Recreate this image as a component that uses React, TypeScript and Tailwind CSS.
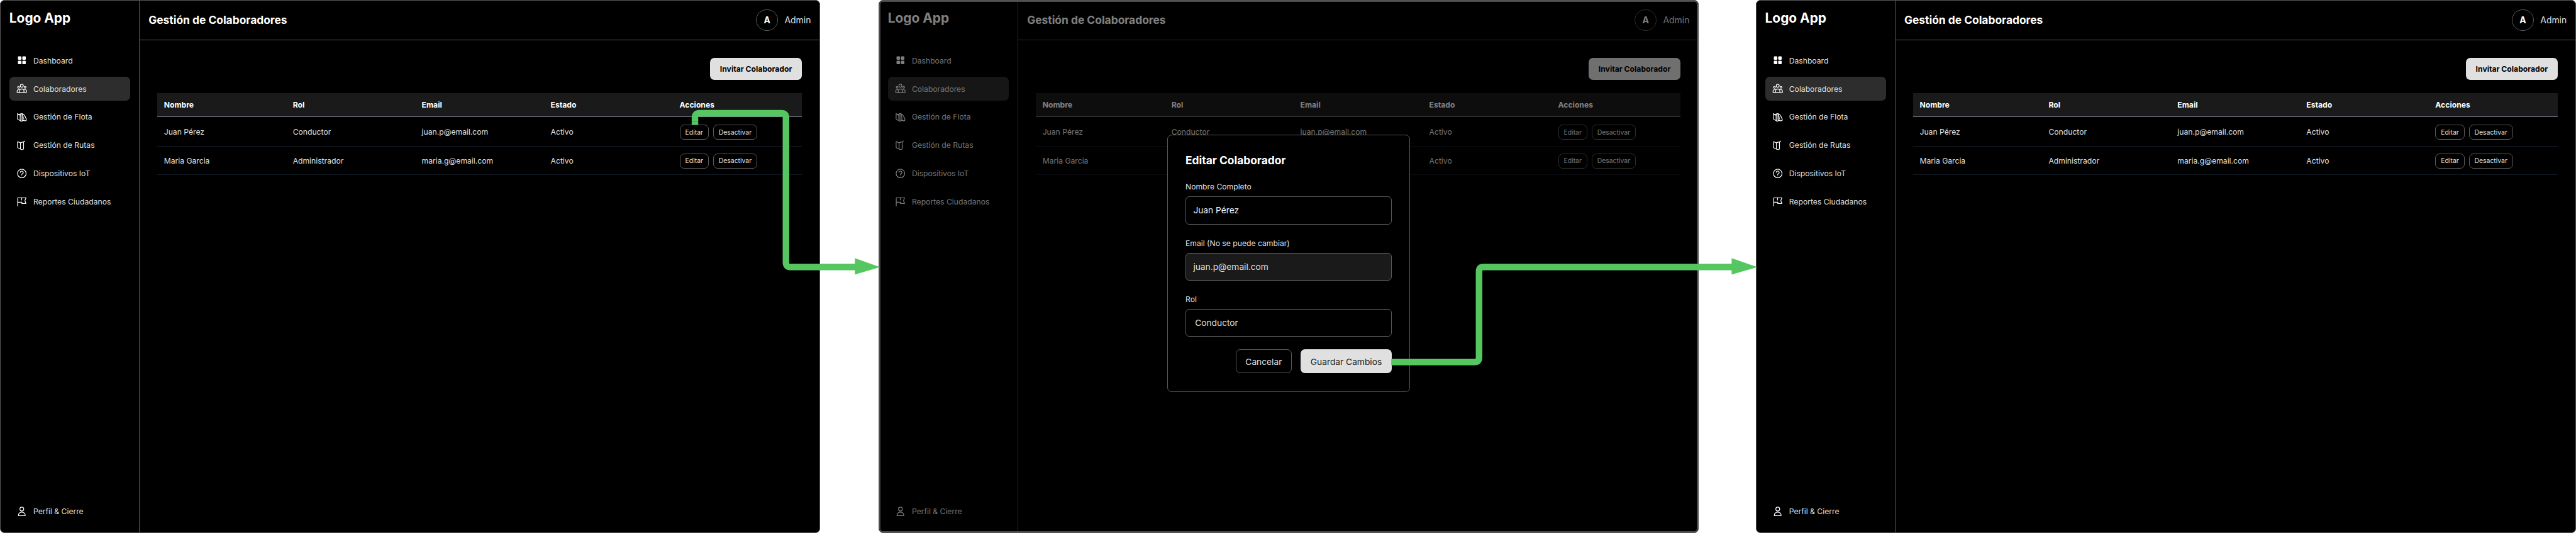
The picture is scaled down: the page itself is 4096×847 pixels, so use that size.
import type { ReactNode } from "react";

function Icon({ children }: { children: ReactNode }) {
  return (
    <svg
      viewBox="0 0 25 25"
      className="size-[17.4px] shrink-0 text-white"
      fill="none"
      stroke="currentColor"
      strokeWidth="1.7"
      strokeLinecap="round"
      strokeLinejoin="round"
      aria-hidden="true"
    >
      {children}
    </svg>
  );
}

const DashboardIcon = () => (
  <Icon>
    <g fill="currentColor" stroke="none">
      <rect x="3.6" y="3.6" width="8" height="8" rx="2" />
      <rect x="13.6" y="3.6" width="8" height="8" rx="2" />
      <rect x="3.6" y="13.6" width="8" height="8" rx="2" />
      <rect x="13.6" y="13.6" width="8" height="8" rx="2" />
    </g>
  </Icon>
);

const PeopleIcon = () => (
  <Icon>
    <circle cx="12.5" cy="6.2" r="3.4" />
    <circle cx="5" cy="9.6" r="2.1" />
    <circle cx="20" cy="9.6" r="2.1" />
    <path d="M7.6 21.4V18a4.9 4.6 0 0 1 9.8 0V21.4" />
    <path d="M7.4 15C4.2 14 1.8 15.9 1.8 18.4V21.4H23.2V18.4C23.2 15.9 20.8 14 17.6 15" />
  </Icon>
);

const FleetIcon = () => (
  <Icon>
    <path d="M8.8 20.9 3.9 18.6Q2.7 18 2.7 16.8V4.9L5.6 7.6 8.8 6.2" />
    <path d="M5.8 7.8 8.6 8.8" />
    <rect x="8.8" y="5.4" width="5.4" height="17.2" rx="2.4" />
    <path d="M11.4 7V21" strokeWidth="1.2" />
    <path d="M10.2 5.4C16.6 4.4 19 8.6 22.6 17.2 23.6 20 22.6 21.2 20.6 21.3 18 21.5 15.8 21 14.4 20.3" />
    <path d="M14.6 8.2 17.6 19.6" strokeWidth="1.2" />
  </Icon>
);

const RoutesIcon = () => (
  <Icon>
    <path d="M9.2 21.2 3.9 18.8Q2.7 18.2 2.7 17V5.6Q2.7 4.2 4 4.8L9.4 7.1V21.2" />
    <path d="M9.4 7.1 16.4 4.9 19.2 3.1" />
    <path d="M9.4 21.2Q12.2 23.4 15.2 22.2 16.5 21.6 16.5 20V5.2" />
  </Icon>
);

const HelpIcon = () => (
  <Icon>
    <circle cx="12.5" cy="12.5" r="9.8" />
    <path d="M9 10.2A3.4 3.2 0 1 1 13.8 13.1Q12.5 13.8 12.5 15" />
    <path d="M12.5 18V18.1" strokeWidth="2" />
  </Icon>
);

const FlagIcon = () => (
  <Icon>
    <path d="M3 22V4.4Q3 3.2 4.4 3.2H22L19.6 9.8 22 16.4H12.6V13.4H3" />
    <path d="M12.2 3.4V8.6" />
  </Icon>
);

const ProfileIcon = () => (
  <Icon>
    <circle cx="12.5" cy="7.2" r="4.4" />
    <path d="M4.8 22.3V21a7.7 6.8 0 0 1 15.4 0V22.3Z" />
  </Icon>
);

const NAV = [
  { label: "Dashboard", icon: <DashboardIcon /> },
  { label: "Colaboradores", icon: <PeopleIcon />, active: true },
  { label: "Gestión de Flota", icon: <FleetIcon /> },
  { label: "Gestión de Rutas", icon: <RoutesIcon /> },
  { label: "Dispositivos IoT", icon: <HelpIcon /> },
  { label: "Reportes Ciudadanos", icon: <FlagIcon /> },
];

const COLUMNS = ["Nombre", "Rol", "Email", "Estado", "Acciones"];

const ROWS = [
  ["Juan Pérez", "Conductor", "juan.p@email.com", "Activo"],
  ["Maria Garcia", "Administrador", "maria.g@email.com", "Activo"],
];

function NavItem({ label, icon, active }: { label: string; icon: ReactNode; active?: boolean }) {
  return (
    <a
      className={
        "flex h-[38px] items-center gap-[9.7px] rounded-[7px] pl-[10.7px] text-[12.17px] text-[#e0e0e0] " +
        (active ? "bg-[#2d2d2d]" : "")
      }
    >
      {icon}
      <span className="pt-[1.6px] whitespace-nowrap">{label}</span>
    </a>
  );
}

function Sidebar() {
  return (
    <aside className="flex w-[221px] shrink-0 flex-col border-r border-[#555555] pt-[13.8px] pr-[13.9px] pb-[14.8px] pl-[14.2px]">
      <div className="-ml-[0.4px] text-[20.87px] leading-[28px] font-bold text-white">Logo App</div>
      <nav className="mt-[34.2px] flex flex-col gap-[6.87px]">
        {NAV.map((item) => (
          <NavItem key={item.label} {...item} />
        ))}
      </nav>
      <div className="mt-auto">
        <NavItem label="Perfil & Cierre" icon={<ProfileIcon />} />
      </div>
    </aside>
  );
}

function TopBar() {
  return (
    <header className="flex h-[63px] shrink-0 items-center justify-between border-b border-[#5a5a5a] pr-[13.8px] pl-[14.2px]">
      <h1 className="text-[17.39px] font-bold text-white">Gestión de Colaboradores</h1>
      <div className="flex items-center gap-[10.4px] text-[13.91px]">
        <div className="flex size-[34.8px] items-center justify-center rounded-full border border-[#5a5a5a] font-bold text-white">
          A
        </div>
        <span className="text-[#e0e0e0]">Admin</span>
      </div>
    </header>
  );
}

function CollaboratorTable() {
  return (
    <div className="mt-[20.6px] text-[12.17px]">
      <div className="mb-[0.9px] grid h-[38.3px] grid-cols-5 items-center border-b border-[#7b8291] bg-[#1a1a1a] pt-px font-bold text-white">
        {COLUMNS.map((column) => (
          <div key={column} className="pl-[10.4px]">
            {column}
          </div>
        ))}
      </div>
      {ROWS.map((row) => (
        <div
          key={row[0]}
          className="grid h-[45.7px] grid-cols-5 items-center border-b border-[#141b24] pt-[1.6px] text-[#e0e0e0]"
        >
          {row.map((cell, i) => (
            <div key={i} className="pl-[10.4px]">
              {cell}
            </div>
          ))}
          <div className="flex gap-[7px] pl-[10.4px] text-[10.43px]">
            <button className="flex h-[23.7px] w-[46.4px] items-center justify-center rounded-[7px] border border-[#5a5a5a] pt-px">
              Editar
            </button>
            <button className="flex h-[23.7px] w-[70px] items-center justify-center rounded-[7px] border border-[#5a5a5a] pt-px">
              Desactivar
            </button>
          </div>
        </div>
      ))}
    </div>
  );
}

function Field({ label, children }: { label: string; children: ReactNode }) {
  return (
    <div className="mb-[21.8px]">
      <div className="mb-[8px] text-[12.17px] leading-[15px] text-[#e0e0e0]">{label}</div>
      {children}
    </div>
  );
}

function EditModal() {
  return (
    <div className="h-[409px] w-[386.2px] rounded-[7px] border border-[#5a5a5a] bg-black px-[28px] pt-[29.5px]">
      <h2 className="mb-[23.8px] text-[17.39px] leading-[21px] font-bold text-white">Editar Colaborador</h2>
      <Field label="Nombre Completo">
        <div className="flex h-[44.8px] items-center rounded-[6px] border border-[#5a5a5a] pl-[11.4px] text-[13.75px] text-[#f0f0f0]">
          Juan Pérez
        </div>
      </Field>
      <Field label="Email (No se puede cambiar)">
        <div className="flex h-[44.8px] items-center rounded-[6px] border border-[#5a5a5a] bg-[#1a1a1a] pt-px pl-[11.4px] text-[13.75px] text-[#e0e0e0]">
          juan.p@email.com
        </div>
      </Field>
      <div className="mb-[8px] text-[12.17px] leading-[15px] text-[#e0e0e0]">Rol</div>
      <div className="flex h-[43.5px] items-center rounded-[6px] border border-[#5a5a5a] pt-px pl-[14.2px] text-[13.75px] text-[#e0e0e0]">
        Conductor
      </div>
      <div className="mt-[20.8px] flex justify-end gap-[13.7px] text-[13.75px]">
        <button className="flex h-[37.7px] w-[89.7px] items-center justify-center rounded-[7px] border border-[#5a5a5a] pt-px text-[#e0e0e0]">
          Cancelar
        </button>
        <button className="flex h-[37.7px] w-[145.3px] items-center justify-center rounded-[7px] bg-[#e0e0e0] pt-px text-[#1a1a1a]">
          Guardar Cambios
        </button>
      </div>
    </div>
  );
}

function Screen({ modal }: { modal?: ReactNode }) {
  return (
    <section className="relative flex h-[847px] w-[1304.2px] shrink-0 overflow-hidden rounded-[7px] border border-[#555555] bg-black">
      <Sidebar />
      <div className="flex min-w-0 flex-1 flex-col">
        <TopBar />
        <main className="flex flex-col pt-[28.3px] pr-[28.1px] pl-[28.3px]">
          <button className="flex h-[34.8px] w-[145.9px] items-center justify-center self-end rounded-[7px] bg-[#e0e0e0] text-[12.17px] font-bold text-black">
            Invitar Colaborador
          </button>
          <CollaboratorTable />
        </main>
      </div>
      {modal && (
        <div className="absolute -inset-px flex items-center justify-center rounded-[7px] border-[3px] border-[#4a4a4a] bg-black/50 pb-[10.6px]">
          {modal}
        </div>
      )}
    </section>
  );
}

function FlowArrows() {
  return (
    <svg
      viewBox="0 0 5888 1217"
      preserveAspectRatio="none"
      className="pointer-events-none absolute inset-0 h-full w-full"
      aria-hidden="true"
    >
      <g fill="none" stroke="#56c661" strokeWidth="15">
        <path d="M1588.5 285V268.5Q1588.5 258.5 1598.5 258.5H1786.5Q1796.5 258.5 1796.5 268.5V599.5Q1796.5 609.5 1806.5 609.5H1955" />
        <path d="M3180 826.5H3370.7Q3380.7 826.5 3380.7 816.5V619.5Q3380.7 609.5 3390.7 609.5H3959" />
      </g>
      <g fill="#56c661">
        <path d="M1954 589.3 2011.5 610 1954 626.8Z" />
        <path d="M3958 589.3 4017 610 3958 626.8Z" />
      </g>
      <path d="M1581 277.2H1596" stroke="#2f7a38" strokeWidth="0.8" />
    </svg>
  );
}

export default function App() {
  return (
    <div className="relative flex h-[847px] w-[4096px] overflow-hidden bg-white font-['Inter',sans-serif]">
      <Screen />
      <div className="w-[92.8px] shrink-0" />
      <Screen modal={<EditModal />} />
      <div className="w-[90.6px] shrink-0" />
      <Screen />
      <FlowArrows />
    </div>
  );
}
